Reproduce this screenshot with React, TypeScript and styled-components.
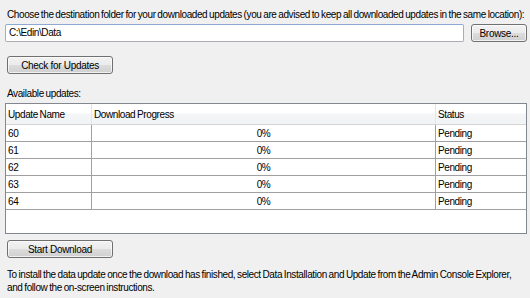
import React from 'react'
import styled, { createGlobalStyle } from 'styled-components'

const Global = createGlobalStyle`
  html, body {
    margin: 0;
    padding: 0;
    background: #f0f0f0;
  }
  body {
    font-family: "Liberation Sans", Arial, sans-serif;
    font-size: 10px;
    letter-spacing: -0.4px;
    word-spacing: -0.6px;
    color: #000;
  }
`

const Page = styled.div`
  width: 530px;
  height: 298px;
  box-sizing: border-box;
  padding: 8px 3px 0 5px;
  display: flex;
  flex-direction: column;
  overflow: hidden;
  & > * {
    flex-shrink: 0;
  }
`

const Label = styled.div<{ top?: number }>`
  margin-top: ${p => p.top ?? 0}px;
  padding-left: 2px;
  line-height: 13px;
  white-space: nowrap;
`

const PathRow = styled.div`
  display: flex;
  align-items: center;
  gap: 7px;
  margin-top: 3px;
`

const PathInput = styled.div`
  flex: 1;
  height: 18px;
  box-sizing: border-box;
  background: #fff;
  border: 1px solid #abadb3;
  border-top-color: #8fa9d0;
  border-radius: 2px;
  padding: 1px 3px;
  line-height: 14px;
`

const Button = styled.button<{ w: number }>`
  width: ${p => p.w}px;
  height: 18px;
  box-sizing: border-box;
  font-family: "Liberation Sans", Arial, sans-serif;
  font-size: 10px;
  letter-spacing: -0.3px;
  color: #000;
  padding: 0;
  border: 1px solid #707070;
  border-radius: 3px;
  background: linear-gradient(#f2f2f2 0%, #ebebeb 50%, #dddddd 51%, #cfcfcf 100%);
  box-shadow: inset 0 0 0 1px rgba(255, 255, 255, 0.7);
  text-align: center;
`

const ButtonRow = styled.div<{ top: number }>`
  margin-top: ${p => p.top}px;
  padding-left: 2px;
`

const Table = styled.div`
  margin-top: 3px;
  height: 131px;
  box-sizing: border-box;
  border: 1px solid #828790;
  background: #fff;
  display: flex;
  flex-direction: column;
`

const Row = styled.div<{ head?: boolean }>`
  display: grid;
  grid-template-columns: 86px 344px 1fr;
  height: ${p => (p.head ? 21 : 17)}px;
  flex-shrink: 0;
  box-sizing: border-box;
  border-bottom: 1px solid ${p => (p.head ? '#d5d5d5' : '#a0a0a0')};
  background: ${p => (p.head ? 'linear-gradient(#ffffff 0%, #ffffff 45%, #f4f5f7 50%, #f2f3f5 100%)' : '#fff')};
`

const Cell = styled.div<{ center?: boolean; head?: boolean }>`
  display: flex;
  align-items: center;
  justify-content: ${p => (p.center ? 'center' : 'flex-start')};
  padding-left: ${p => (p.center ? 0 : 2)}px;
  border-right: 1px solid ${p => (p.head ? '#e5e5e5' : '#a0a0a0')};
  &:last-child {
    border-right: none;
  }
`

const Note = styled.div`
  margin-top: 10px;
  padding-left: 2px;
  line-height: 13px;
  white-space: nowrap;
`

const updates = ['60', '61', '62', '63', '64']

export default function App() {
  return (
    <Page>
      <Global />
      <Label>
        Choose the destination folder for your downloaded updates (you are advised to keep all downloaded updates in the same location):
      </Label>
      <PathRow>
        <PathInput>C:\Edin\Data</PathInput>
        <Button w={56}>Browse...</Button>
      </PathRow>
      <ButtonRow top={14}>
        <Button w={106}>Check for Updates</Button>
      </ButtonRow>
      <Label top={13}>Available updates:</Label>
      <Table>
        <Row head>
          <Cell head>Update Name</Cell>
          <Cell head>Download Progress</Cell>
          <Cell head>Status</Cell>
        </Row>
        {updates.map(u => (
          <Row key={u}>
            <Cell>{u}</Cell>
            <Cell center>0%</Cell>
            <Cell>Pending</Cell>
          </Row>
        ))}
      </Table>
      <ButtonRow top={6}>
        <Button w={106}>Start Download</Button>
      </ButtonRow>
      <Note>
        To install the data update once the download has finished, select Data Installation and Update from the Admin Console Explorer,
        <br />
        and follow the on-screen instructions.
      </Note>
    </Page>
  )
}
